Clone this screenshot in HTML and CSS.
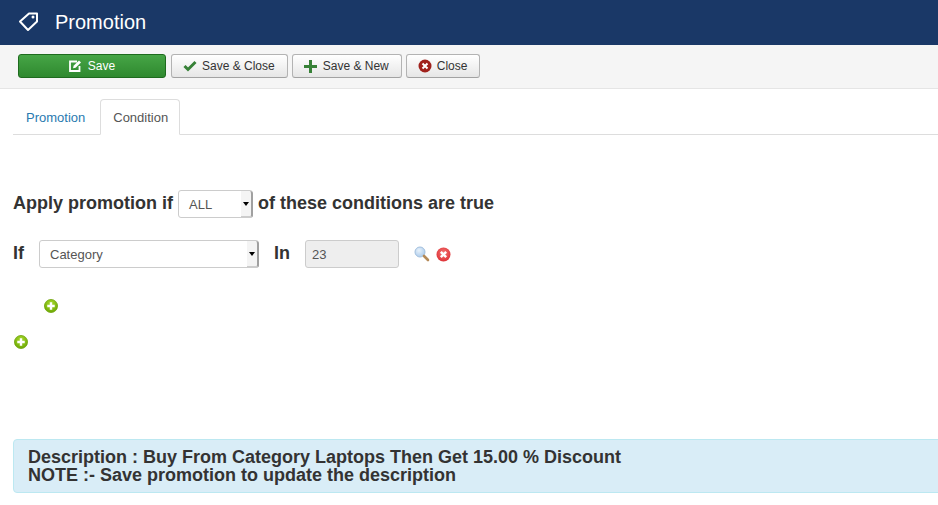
FILE: index.html
```html
<!DOCTYPE html>
<html lang="en">
<head>
    <meta charset="UTF-8">
    <title>Promotion</title>
    <link rel="stylesheet" href="styles.css">
</head>
<body>
<header class="title-bar">
    <svg class="title-icon" width="24" height="24" viewBox="0 0 24 24">
        <path d="M4 12.500 13 4.500h8v8L12 21z" fill="none" stroke="#fff" stroke-width="2" stroke-linejoin="round"/>
        <circle cx="17" cy="8" r="1.500" fill="#fff"/>
    </svg>
    <h1>Promotion</h1>
</header>

<div class="toolbar">
    <button class="btn btn-save" type="button">
        <svg width="14" height="14" viewBox="0 0 14 14">
            <path d="M9 2.500H2v9.500h9.500V7" fill="none" stroke="#fff" stroke-width="1.800"/>
            <path d="M5 9.300 5.600 6.800 11 1.400l2 2-5.400 5.400z" fill="#fff"/>
        </svg>
        Save
    </button>
    <button class="btn" type="button">
        <svg width="14" height="14" viewBox="0 0 14 14">
            <path d="M1.500 7 5 10.500l7.500-7.500" fill="none" stroke="#378137" stroke-width="3"/>
        </svg>
        Save &amp; Close
    </button>
    <button class="btn" type="button">
        <svg width="14" height="13" viewBox="0 0 14 13">
            <path d="M5 0h3v5h5v3H8v5H5V8H0V5h5z" fill="#378137"/>
        </svg>
        Save &amp; New
    </button>
    <button class="btn" type="button">
        <svg width="14" height="14" viewBox="0 0 14 14">
            <circle cx="7" cy="7" r="6.500" fill="#a0211c"/>
            <path d="M4.500 4.500l5 5m0-5-5 5" stroke="#fff" stroke-width="2"/>
        </svg>
        Close
    </button>
</div>

<main class="content">
    <ul class="tabs">
        <li class="tab"><a href="#">Promotion</a></li>
        <li class="tab active"><a href="#">Condition</a></li>
    </ul>

    <div class="rule-head">
        <span class="rule-text">Apply promotion if</span>
        <div class="select select-small">ALL<i class="select-arrow"></i></div>
        <span class="rule-text">of these conditions are true</span>
    </div>

    <div class="rule-row">
        <span class="rule-text">If</span>
        <div class="select select-wide">Category<i class="select-arrow"></i></div>
        <span class="rule-text rule-in">In</span>
        <input class="rule-value" type="text" value="23" readonly>
        <svg class="icon-search" width="16" height="16" viewBox="0 0 16 16">
            <defs>
                <radialGradient id="lens" cx=".4" cy=".35" r=".7">
                    <stop offset="0" stop-color="#e8f2fb"/>
                    <stop offset="1" stop-color="#a9c9ea"/>
                </radialGradient>
            </defs>
            <circle cx="6" cy="6" r="5" fill="url(#lens)" stroke="#a3c0de"/>
            <path d="M10 10 14 14" stroke="#b58a58" stroke-width="2.600" stroke-linecap="round"/>
        </svg>
        <svg class="icon-remove" width="15" height="15" viewBox="0 0 15 15">
            <defs>
                <radialGradient id="red" cx=".5" cy=".4" r=".65">
                    <stop offset="0" stop-color="#f47a78"/>
                    <stop offset="1" stop-color="#dc2b30"/>
                </radialGradient>
            </defs>
            <circle cx="7.500" cy="7.500" r="7" fill="url(#red)"/>
            <path d="M4.800 4.800l5.400 5.400m0-5.400-5.400 5.400" stroke="#fff" stroke-width="2.400"/>
        </svg>
    </div>

    <div class="add-line add-inner">
        <svg width="14" height="14" viewBox="0 0 15 15">
            <defs>
                <radialGradient id="green" cx=".5" cy=".3" r=".75">
                    <stop offset="0" stop-color="#a6d82c"/>
                    <stop offset="1" stop-color="#6aa602"/>
                </radialGradient>
            </defs>
            <circle cx="7.500" cy="7.500" r="7" fill="url(#green)" stroke="#6aa000" stroke-width=".8"/>
            <path d="M6.200 3.500h2.600v2.700h2.700v2.600H8.800v2.700H6.200V8.800H3.500V6.200h2.700z" fill="#fff"/>
        </svg>
    </div>
    <div class="add-line add-outer">
        <svg width="14" height="14" viewBox="0 0 15 15">
            <circle cx="7.500" cy="7.500" r="7" fill="url(#green)" stroke="#6aa000" stroke-width=".8"/>
            <path d="M6.200 3.500h2.600v2.700h2.700v2.600H8.800v2.700H6.200V8.800H3.500V6.200h2.700z" fill="#fff"/>
        </svg>
    </div>

    <div class="alert-info">
        Description : Buy From Category Laptops Then Get 15.00 % Discount<br>
        NOTE :- Save promotion to update the description
    </div>
</main>
</body>
</html>
```

FILE: styles.css
```css
html, body {
    overflow: hidden
}

body {
    margin: 0;
    font-family: "Liberation Sans", Arial, sans-serif;
    font-size: 13px;
    color: #333;
    background: #fff
}

.title-bar {
    display: flex;
    align-items: center;
    height: 45px;
    padding-left: 16px;
    box-sizing: border-box;
    background: #1a3867
}

.title-bar h1 {
    margin: 0 0 0 15px;
    font-size: 20px;
    font-weight: normal;
    color: #fff
}

.title-icon {
    margin-top: -3px
}

.toolbar {
    display: flex;
    gap: 4px;
    height: 44px;
    padding: 9px 18px 0;
    box-sizing: border-box;
    background: #f5f5f5;
    border-bottom: 1px solid #e5e5e5
}

.btn {
    display: flex;
    align-items: center;
    gap: 5px;
    height: 24px;
    padding: 0 12px 0 11px;
    border: 1px solid #b3b3b3;
    border-bottom-color: #a2a2a2;
    border-radius: 3px;
    background: linear-gradient(#fff, #e6e6e6);
    font: 12px "Liberation Sans", Arial, sans-serif;
    color: #333
}

.btn-save {
    justify-content: center;
    gap: 6px;
    width: 148px;
    margin-right: 1px;
    border-color: #1e6b1e;
    background: linear-gradient(#46a546, #2f892f);
    color: #fff
}

.content {
    padding: 10px 0 0 13px
}

.tabs {
    display: flex;
    gap: 2px;
    height: 36px;
    margin: 0;
    padding: 0;
    list-style: none;
    box-sizing: border-box;
    border-bottom: 1px solid #ddd
}

.tab a {
    display: block;
    height: 36px;
    padding: 0 13px;
    box-sizing: border-box;
    line-height: 37px;
    color: #2a7ab0;
    text-decoration: none
}

.tab.active a {
    padding: 0 11px 0 12px;
    border: 1px solid #ddd;
    border-bottom-color: #fff;
    border-radius: 4px 4px 0 0;
    line-height: 35px;
    color: #555
}

.rule-head, .rule-row {
    display: flex;
    align-items: center;
    height: 28px;
    font-size: 18px;
    font-weight: bold;
    color: #333
}

.rule-head {
    gap: 5px;
    margin-top: 55px
}

.rule-row {
    margin-top: 22px
}

.rule-text {
    margin-top: -2px
}

.select {
    position: relative;
    height: 28px;
    padding-left: 10px;
    box-sizing: border-box;
    border: 1px solid #ccc;
    border-radius: 3px;
    background: #fff;
    font-size: 13px;
    font-weight: normal;
    line-height: 27px;
    color: #555
}

.select-small {
    width: 75px
}

.select-wide {
    width: 220px;
    margin-left: 15px
}

/* native arrow strip on the right edge */
.select-arrow {
    position: absolute;
    top: 0;
    right: -1px;
    bottom: -1px;
    width: 12px;
    box-sizing: border-box;
    border-right: 2px solid #a0a0a0;
    border-bottom: 2px solid #ccc;
    border-radius: 0 3px 3px 0;
    background: #f4f4f4
}

.select-arrow::after {
    content: "";
    position: absolute;
    top: 11px;
    left: 2px;
    border: 3px solid transparent;
    border-top: 4px solid #000;
    border-bottom: 0
}

.rule-in {
    margin-left: 15px
}

.rule-value {
    width: 94px;
    height: 28px;
    margin-left: 15px;
    padding: 0 6px;
    box-sizing: border-box;
    border: 1px solid #ccc;
    border-radius: 3px;
    outline: none;
    background: #eee;
    font: 13px "Liberation Sans", Arial, sans-serif;
    color: #555
}

.icon-search {
    margin-left: 15px
}

.icon-remove {
    margin-left: 6px
}

.add-line {
    display: flex;
    height: 14px
}

.add-inner {
    margin-top: 31px;
    padding-left: 31px
}

.add-outer {
    margin-top: 22px;
    padding-left: 1px
}

.alert-info {
    margin-top: 90px;
    margin-right: -10px;
    padding: 8px 14px;
    border: 1px solid #bce8f1;
    border-radius: 4px;
    background: #d9edf7;
    font-size: 18px;
    font-weight: bold;
    line-height: 18px;
    color: #333
}
```
